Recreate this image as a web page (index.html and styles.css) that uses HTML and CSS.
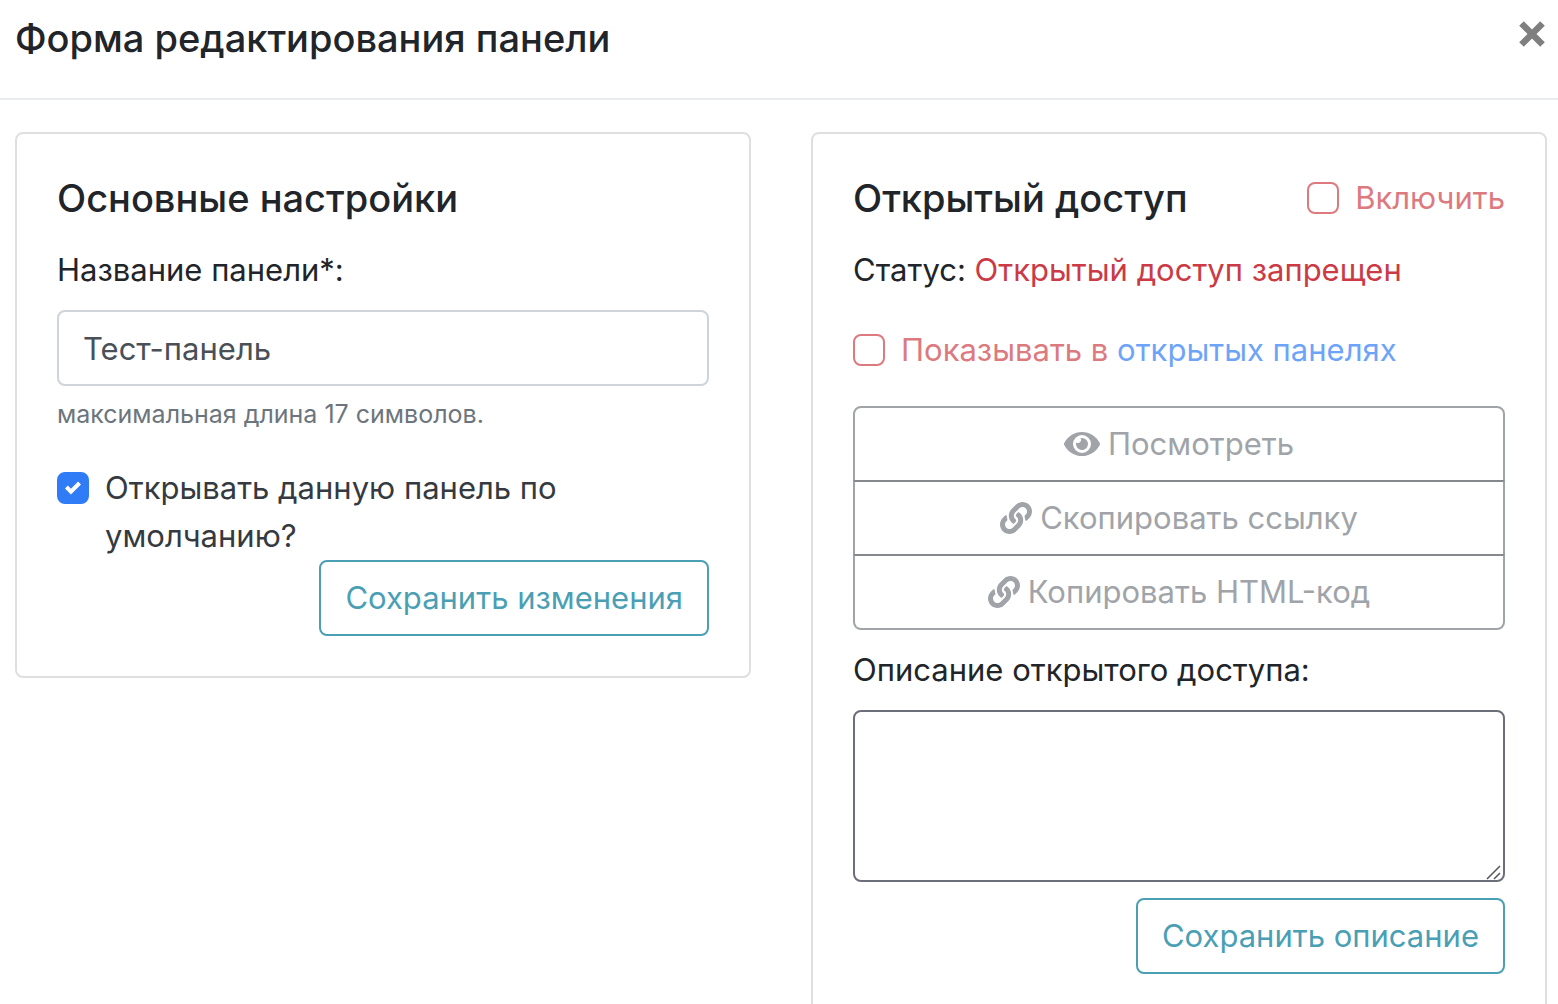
FILE: index.html
```html
<!DOCTYPE html>
<html lang="ru">
<head>
<meta charset="utf-8">
<meta name="viewport" content="width=device-width, initial-scale=1">
<title>Форма редактирования панели</title>
<link rel="stylesheet" href="styles.css">
</head>
<body>
<svg class="sprite" aria-hidden="true">
  <symbol id="icon-link" viewBox="0 0 512 512"><path d="M326.612 185.391c59.747 59.809 58.927 155.698.36 214.59-.11.12-.24.25-.36.37l-67.2 67.2c-59.27 59.27-155.699 59.262-214.96 0-59.27-59.26-59.27-155.7 0-214.96l37.106-37.106c9.84-9.84 26.786-3.3 27.294 10.606.648 17.722 3.826 35.527 9.69 52.721 1.986 5.822.567 12.262-3.783 16.612l-13.087 13.087c-28.026 28.026-28.905 73.66-1.155 101.96 28.024 28.579 74.086 28.749 102.325.51l67.2-67.19c28.191-28.191 28.073-73.757 0-101.83-3.701-3.694-7.429-6.564-10.341-8.569a16.037 16.037 0 0 1-6.947-12.606c-.396-10.567 3.348-21.456 11.698-29.806l21.054-21.055c5.521-5.521 14.182-6.199 20.584-1.731a152.482 152.482 0 0 1 20.522 17.197zM467.547 44.449c-59.261-59.262-155.69-59.27-214.96 0l-67.2 67.2c-.12.12-.25.25-.36.37-58.566 58.892-59.387 154.781.36 214.59a152.454 152.454 0 0 0 20.521 17.196c6.402 4.468 15.064 3.789 20.584-1.731l21.054-21.055c8.35-8.35 12.094-19.239 11.698-29.806a16.037 16.037 0 0 0-6.947-12.606c-2.912-2.005-6.64-4.875-10.341-8.569-28.073-28.073-28.191-73.639 0-101.83l67.2-67.19c28.239-28.239 74.3-28.069 102.325.51 27.75 28.3 26.872 73.934-1.155 101.96l-13.087 13.087c-4.35 4.35-5.769 10.79-3.783 16.612 5.864 17.194 9.042 34.999 9.69 52.721.509 13.906 17.454 20.446 27.294 10.606l37.106-37.106c59.271-59.259 59.271-155.699.001-214.959z"/></symbol>
  <symbol id="icon-eye" viewBox="0 0 576 512"><path d="M572.52 241.4C518.29 135.59 410.93 64 288 64S57.68 135.64 3.48 241.41a32.35 32.35 0 0 0 0 29.19C57.71 376.41 165.07 448 288 448s230.32-71.64 284.52-177.41a32.35 32.35 0 0 0 0-29.19zM288 400a144 144 0 1 1 144-144 143.93 143.93 0 0 1-144 144zm0-240a95.31 95.31 0 0 0-25.31 3.79 47.85 47.85 0 0 1-66.9 66.9A95.78 95.78 0 1 0 288 160z"/></symbol>
</svg>

<div class="modal">
  <header class="modal-header">
    <h1 class="title">Форма редактирования панели</h1>
    <button class="close" type="button" aria-label="Закрыть">
      <svg viewBox="0 0 26 26" width="26" height="26" aria-hidden="true"><path d="M2.5 2.500 23.500 23.500M23.500 2.500 2.500 23.500" fill="none" stroke="currentColor" stroke-width="6.500"/></svg>
    </button>
  </header>

  <main class="modal-body">
    <form class="card">
      <h2 class="title">Основные настройки</h2>
      <label class="label" for="panel-name">Название панели*:</label>
      <input class="field" id="panel-name" type="text" maxlength="17" value="Тест-панель">
      <small class="hint">максимальная длина 17 символов.</small>
      <div class="check check-default">
        <input class="check-box" id="open-default" type="checkbox" checked>
        <label for="open-default">Открывать данную панель по умолчанию?</label>
      </div>
      <button class="btn btn-info" type="button">Сохранить изменения</button>
    </form>

    <form class="card">
      <div class="card-head">
        <h2 class="title">Открытый доступ</h2>
        <div class="check check-danger">
          <input class="check-box" id="enable" type="checkbox">
          <label for="enable">Включить</label>
        </div>
      </div>
      <p class="status">Статус: <span class="status-off">Открытый доступ запрещен</span></p>
      <div class="check check-danger check-show">
        <input class="check-box" id="show" type="checkbox">
        <label for="show">Показывать в <a href="#">открытых панелях</a></label>
      </div>
      <div class="btn-group">
        <button class="btn btn-muted" type="button" disabled><svg class="icon-eye" aria-hidden="true"><use href="#icon-eye"/></svg>Посмотреть</button>
        <button class="btn btn-muted" type="button" disabled><svg class="icon-link" aria-hidden="true"><use href="#icon-link"/></svg>Скопировать ссылку</button>
        <button class="btn btn-muted" type="button" disabled><svg class="icon-link" aria-hidden="true"><use href="#icon-link"/></svg>Копировать HTML-код</button>
      </div>
      <label class="label" for="description">Описание открытого доступа:</label>
      <div class="area-wrap">
        <textarea class="area" id="description"></textarea>
        <svg class="grip" viewBox="0 0 16 16" width="16" height="16" aria-hidden="true"><path d="M1 15 14 2M8 15 14 9" fill="none" stroke="#555" stroke-width="1.500"/></svg>
      </div>
      <button class="btn btn-info" type="button">Сохранить описание</button>
    </form>
  </main>
</div>
</body>
</html>
```
FILE: styles.css
```css
*, *::before, *::after { box-sizing: border-box; }

body {
  margin: 0;
  background: #fff;
  color: #212529;
  font: 400 31px/48px Inter, "Liberation Sans", sans-serif;
}

.sprite { display: none; }

.modal {
  display: flex;
  flex-direction: column;
  height: 100vh;
  overflow: hidden;
}

.modal-header {
  display: flex;
  flex: none;
  align-items: flex-start;
  justify-content: space-between;
  padding: 14px 13px 36px 15px;
  border-bottom: 2px solid #e9ecef;
}

.title {
  margin: 0;
  font-size: 38px;
  line-height: 48px;
  font-weight: 500;
}

.close {
  display: flex;
  margin: 0;
  padding: 7px 0;
  border: 0;
  background: none;
  color: #7f7f7f;
}

.modal-body {
  display: grid;
  grid-template-columns: 1fr 1fr;
  align-items: start;
  gap: 60px;
  padding: 32px 11px 32px 15px;
}

.card {
  display: flex;
  flex-direction: column;
  min-width: 0;
  padding: 40px;
  border: 2px solid #dfdfdf;
  border-radius: 8px;
}

.card > .title, .card-head { margin-bottom: 24px; }

.card-head {
  display: flex;
  justify-content: space-between;
}

.label { margin-bottom: 16px; }

.field {
  width: 100%;
  height: 76px;
  padding: 12px 24px;
  border: 2px solid #ced4da;
  border-radius: 8px;
  background: #fff;
  color: #495057;
  font: inherit;
}

.hint {
  margin-top: 8px;
  color: #6c757d;
  font-size: 25px;
  line-height: 40px;
}

.check {
  display: flex;
  align-items: flex-start;
  gap: 16px;
}

.check-box {
  flex: none;
  appearance: none;
  width: 32px;
  height: 32px;
  margin: 8px 0;
  border: 2px solid #adb5bd;
  border-radius: 8px;
  background: #fff;
}

.check-box:checked {
  border-color: #2f7cf6;
  background: #2f7cf6 url("data:image/svg+xml,%3Csvg xmlns='http://www.w3.org/2000/svg' viewBox='0 0 8 8'%3E%3Cpath fill='%23fff' d='M6.564.75l-3.59 3.612-1.538-1.55L0 4.26l2.974 2.99L8 2.193z'/%3E%3C/svg%3E") center / 16px 16px no-repeat;
}

.check-default {
  margin-top: 30px;
  color: #343a40;
}

.check-danger { color: #dc7a80; }
.check-danger .check-box { border-color: #dc7a80; }
.check-show { margin: 32px 0; }

.check a {
  color: #6ea4f8;
  text-decoration: none;
}

.status { margin: 0; }
.status-off { color: #cb3a45; }

.btn {
  display: flex;
  align-items: center;
  justify-content: center;
  gap: 8px;
  height: 76px;
  margin: 0;
  padding: 0 24px;
  border: 2px solid;
  border-radius: 8px;
  background: #fff;
  font: inherit;
  white-space: nowrap;
}

.btn-info {
  align-self: flex-end;
  border-color: #4a9fb5;
  color: #4a9fb5;
}

.btn-group {
  display: flex;
  flex-direction: column;
  margin-bottom: 16px;
}

.btn-muted {
  border-color: #a0a4a8;
  color: #a0a4a8;
}

.btn-muted + .btn-muted {
  margin-top: -2px;
  border-top-color: #85898e;
}

.btn-muted:first-child { border-radius: 8px 8px 0 0; }
.btn-muted:nth-child(2) { border-radius: 0; }
.btn-muted:last-child { border-radius: 0 0 8px 8px; }

.icon-eye, .icon-link {
  height: 32px;
  fill: currentColor;
}

.icon-eye { width: 36px; }
.icon-link { width: 32px; }

.area-wrap {
  position: relative;
  display: flex;
  margin-bottom: 16px;
}

.area {
  width: 100%;
  height: 172px;
  padding: 12px 24px;
  border: 2px solid #6b6f7a;
  border-radius: 8px;
  background: #fff;
  color: #495057;
  font: inherit;
  resize: vertical;
}

.area::-webkit-resizer { background: transparent; }

.grip {
  position: absolute;
  right: 3px;
  bottom: 2px;
  pointer-events: none;
}
```
